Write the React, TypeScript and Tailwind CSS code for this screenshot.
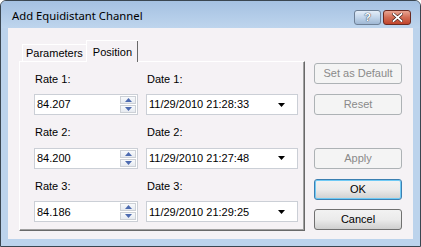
import React from 'react';

const rows = [
  { rate: '84.207', date: '11/29/2010 21:28:33' },
  { rate: '84.200', date: '11/29/2010 21:27:48' },
  { rate: '84.186', date: '11/29/2010 21:29:25' },
];

function Spinner() {
  return (
    <div className="flex flex-col gap-px mr-px">
      {[0, 1].map((i) => (
        <div
          key={i}
          className="w-[16px] h-[8px] border border-[#ccd0d6] bg-gradient-to-b from-[#f8fafc] to-[#e6eaf0] flex items-center justify-center"
        >
          <svg width="7" height="4" viewBox="0 0 7 4">
            {i === 0 ? (
              <polygon points="3.5,0 7,4 0,4" fill="#4d6bb0" />
            ) : (
              <polygon points="0,0 7,0 3.5,4" fill="#4d6bb0" />
            )}
          </svg>
        </div>
      ))}
    </div>
  );
}

function Button({ label, variant }: { label: string; variant: 'disabled' | 'default' | 'normal' }) {
  const base = 'w-[88px] h-[21px] rounded-[3px] flex items-center justify-center text-[11px]';
  if (variant === 'disabled') {
    return <div className={`${base} border border-[#adb2b5] bg-[#f4f4f4] text-[#8a8a8a]`}>{label}</div>;
  }
  if (variant === 'default') {
    return (
      <div className={`${base} border border-[#3c7fb1] bg-gradient-to-b from-[#f2f2f2] via-[#ebebeb] to-[#cfcfcf] text-black shadow-[inset_0_0_0_1px_#6fcaf5]`}>
        {label}
      </div>
    );
  }
  return (
    <div className={`${base} border border-[#707070] bg-gradient-to-b from-[#f2f2f2] via-[#ebebeb] to-[#cfcfcf] text-black`}>
      {label}
    </div>
  );
}

export default function App() {
  return (
    <div className="w-[421px] h-[247px] bg-white">
      <div
        className="w-[421px] h-[247px] flex flex-col border border-[#3a4651] rounded-t-[6px] bg-[#bcd3ec] overflow-hidden"
        style={{ fontFamily: '"Liberation Sans", Arial, sans-serif' }}
      >
        {/* title bar */}
        <div className="h-[27px] flex items-start bg-gradient-to-b from-[#a5c1e2] to-[#bed5ed] relative">
          <span
            className="absolute left-[11px] top-[7px] text-[11.3px] text-black"
            style={{ fontFamily: '"Noto Sans", "Open Sans", sans-serif' }}
          >
            Add Equidistant Channel
          </span>
          <div className="ml-auto mr-[9px] mt-[9px] flex gap-[2px]">
            <div className="w-[27px] h-[15px] rounded-[3px] border border-[#6d7f95] bg-gradient-to-b from-[#e4eef9] via-[#c2d5ea] to-[#9fb8d4] flex items-center justify-center text-[11px] font-bold text-white leading-none [text-shadow:0_0_1px_#2b3c54,0_0_1px_#2b3c54]">
              ?
            </div>
            <div className="w-[28px] h-[15px] rounded-[3px] border border-[#6b2a20] bg-gradient-to-b from-[#e8a593] via-[#d16c54] to-[#c0442b] flex items-center justify-center">
              <svg width="11" height="9" viewBox="0 0 11 9">
                <path d="M1.5 1 L9.5 8 M9.5 1 L1.5 8" stroke="#3d1a14" strokeWidth="3" strokeLinecap="square" />
                <path d="M1.5 1 L9.5 8 M9.5 1 L1.5 8" stroke="#ffffff" strokeWidth="1.8" strokeLinecap="square" />
              </svg>
            </div>
          </div>
        </div>

        {/* client area */}
        <div className="flex-1 mx-[7px] mb-[7px] bg-[#f5f2f5] flex text-[11px] text-black">
          {/* tab control */}
          <div className="ml-[11px] mt-[11px] flex flex-col">
            <div className="flex items-end h-[22px] pl-[3px]">
              <div className="h-[17px] px-[3px] border-t border-l border-white bg-[#f5f2f5] flex items-center">
                Parameters
              </div>
              <div className="h-[22px] -mb-[1px] pl-[6px] pr-[6px] border-t border-l border-white bg-[#f5f2f5] flex items-start pt-[3px] shadow-[inset_-1px_0_0_#696969] relative z-10">
                Position
              </div>
            </div>
            <div className="w-[286px] h-[170px] border-t border-l border-white border-r border-b border-r-[#696969] border-b-[#696969] shadow-[inset_-1px_-1px_0_#a0a0a0] pl-[14px] pr-[6px] pt-[7px] flex flex-col">
              {rows.map((r, i) => (
                <div key={i} className="flex gap-[8px] h-[54px]">
                  <div className="flex flex-col gap-[5px]">
                    <div className="h-[20px] pl-[1px] flex items-center">Rate {i + 1}:</div>
                    <div className="w-[104px] h-[21px] bg-white border border-[#cbcfd6] flex items-center justify-between pl-[2px]">
                      <span>{r.rate}</span>
                      <Spinner />
                    </div>
                  </div>
                  <div className="flex flex-col gap-[5px]">
                    <div className="h-[20px] pl-[1px] flex items-center">Date {i + 1}:</div>
                    <div className="w-[152px] h-[21px] bg-white border border-[#cbcfd6] flex items-center justify-between pl-[2px] pr-[12px]">
                      <span>{r.date}</span>
                      <svg width="7" height="4" viewBox="0 0 7 4">
                        <polygon points="0,0 7,0 3.5,4" fill="#000" />
                      </svg>
                    </div>
                  </div>
                </div>
              ))}
            </div>
          </div>

          {/* buttons */}
          <div className="ml-[9px] mt-[35px] flex flex-col">
            <Button label="Set as Default" variant="disabled" />
            <div className="mt-[10px]">
              <Button label="Reset" variant="disabled" />
            </div>
            <div className="mt-[33px]">
              <Button label="Apply" variant="disabled" />
            </div>
            <div className="mt-[10px]">
              <Button label="OK" variant="default" />
            </div>
            <div className="mt-[9px]">
              <Button label="Cancel" variant="normal" />
            </div>
          </div>
        </div>
      </div>
    </div>
  );
}
